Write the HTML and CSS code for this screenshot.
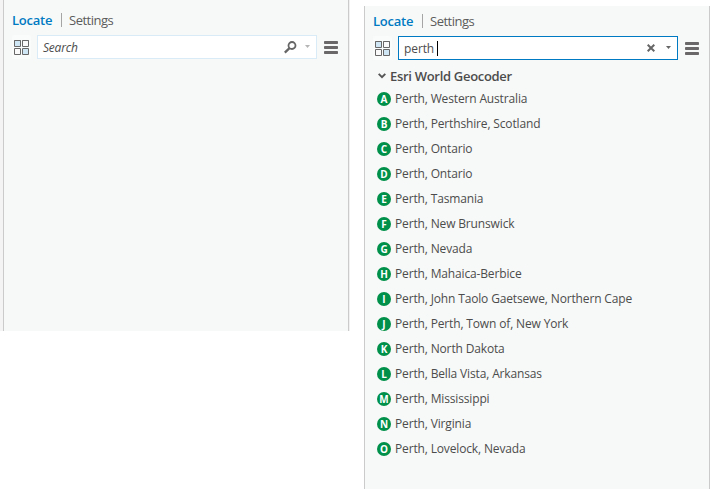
FILE: index.html
```html
<!DOCTYPE html>
<html lang="en">
<head>
<meta charset="utf-8">
<title>Locate</title>
<link rel="stylesheet" href="styles.css">
</head>
<body>
<svg width="0" height="0" class="defs">
  <symbol id="grid" viewBox="0 0 15 15"><g stroke="#686868"><path fill="#cfe7f5" d="M.5.5h6v5h-6zM8.500 8.500h6v6h-6z"/><path fill="#fafafa" d="M8.500.5h6v5h-6zM.5 8.500h6v6h-6z"/><path fill="#cfe7f5" d="M.5.5h6v6h-6z"/><path fill="#fafafa" d="M8.500.5h6v6h-6z"/></g></symbol>
  <symbol id="menu" viewBox="0 0 14 13"><g fill="#6a6868"><rect width="14" height="3" rx=".8"/><rect y="5" width="14" height="3" rx=".8"/><rect y="10" width="14" height="3" rx=".8"/></g></symbol>
  <symbol id="caret" viewBox="0 0 5 3"><path d="M0 0h5L2.500 3z" fill="currentColor"/></symbol>
</svg>
<main class="stage">
  <section class="pane pane-empty">
    <nav class="tabs"><span class="tab active">Locate</span><i class="divider"></i><span class="tab settings">Settings</span></nav>
    <div class="toolbar">
      <span class="grid-button"><svg width="15" height="15"><use href="#grid"/></svg></span>
      <div class="search"><span class="placeholder">Search</span>
        <svg class="magnifier" width="13" height="13" viewBox="0 0 13 13" fill="none" stroke="#666"><circle cx="8" cy="4.500" r="3.500" stroke-width="1.800"/><path d="M5.500 7.200.8 11.600" stroke-width="2.300"/></svg>
        <svg class="caret" width="5" height="3"><use href="#caret"/></svg></div>
      <svg class="menu" width="14" height="13"><use href="#menu"/></svg>
    </div>
  </section>
  <section class="pane pane-results">
    <nav class="tabs"><span class="tab active">Locate</span><i class="divider"></i><span class="tab settings">Settings</span></nav>
    <div class="toolbar">
      <span class="grid-button"><svg width="15" height="15"><use href="#grid"/></svg></span>
      <div class="search focused"><span class="query">perth</span><i class="cursor"></i>
        <svg class="clear" width="8" height="8" viewBox="0 0 8 8"><path d="M.7.7l6.600 6.600M7.300.7.7 7.300" stroke="#666" stroke-width="2"/></svg>
        <svg class="caret" width="5" height="3"><use href="#caret"/></svg></div>
      <svg class="menu" width="14" height="13"><use href="#menu"/></svg>
    </div>
    <h2 class="group"><svg width="8" height="6" viewBox="0 0 8 6"><path d="M.7.8 4 4.200 7.300.8" fill="none" stroke="#555" stroke-width="1.900"/></svg><span>Esri World Geocoder</span></h2>
    <ul class="results">
      <li><b>A</b><span>Perth, Western Australia</span></li>
      <li><b>B</b><span>Perth, Perthshire, Scotland</span></li>
      <li><b>C</b><span>Perth, Ontario</span></li>
      <li><b>D</b><span>Perth, Ontario</span></li>
      <li><b>E</b><span>Perth, Tasmania</span></li>
      <li><b>F</b><span>Perth, New Brunswick</span></li>
      <li><b>G</b><span>Perth, Nevada</span></li>
      <li><b>H</b><span>Perth, Mahaica-Berbice</span></li>
      <li><b>I</b><span>Perth, John Taolo Gaetsewe, Northern Cape</span></li>
      <li><b>J</b><span>Perth, Perth, Town of, New York</span></li>
      <li><b>K</b><span>Perth, North Dakota</span></li>
      <li><b>L</b><span>Perth, Bella Vista, Arkansas</span></li>
      <li><b>M</b><span>Perth, Mississippi</span></li>
      <li><b>N</b><span>Perth, Virginia</span></li>
      <li><b>O</b><span>Perth, Lovelock, Nevada</span></li>
    </ul>
  </section>
</main>
</body>
</html>
```
FILE: styles.css
```css
* { box-sizing: border-box; }
body { margin: 0; background: #fff; font-family: "Open Sans", "Noto Sans", sans-serif; font-size: 12px; color: #4c4c4c; overflow: hidden; }
.defs { display: block; }
svg { display: block; flex: none; }
.stage { display: flex; align-items: flex-start; width: 711px; height: 491px; }
.pane { width: 346px; flex: none; background: #f7f9f8; border: solid #cbcbcb; border-width: 0 1px; padding-left: 8px; }
.pane-empty { height: 331px; margin-left: 3px; padding-top: 11px; box-shadow: -3px 0 #f4f4f4, 1px 0 #f1f1f1; }
.pane-results { height: 483px; margin: 6px 0 0 15px; padding-top: 6px; }
.tabs { display: flex; height: 18px; align-items: center; line-height: 18px; font-size: 13px; }
.tab { white-space: nowrap; }
.active { width: 49px; color: #007ac2; font-weight: 600; letter-spacing: -.25px; }
.divider { width: 1px; height: 14px; margin-right: 7px; background: #a5a5a5; }
.settings { color: #5c5c5c; letter-spacing: -.5px; }
.toolbar { display: flex; align-items: center; height: 24px; margin-top: 6px; }
.grid-button { display: flex; align-items: center; justify-content: center; width: 19px; height: 24px; margin-right: 6px; background: #fafbfb; border-radius: 2px; }
.search { display: flex; align-items: center; width: 280px; height: 24px; padding: 0 6px 0 5px; background: #fff; border: 1px solid #d9ebf7; color: #b5b5b5; }
.focused { border-color: #007ac2; color: #666; }
.placeholder { color: #4c4c4c; font-style: italic; letter-spacing: -.2px; }
.query { color: #4c4c4c; letter-spacing: -.1px; }
.cursor { width: 1px; height: 15px; margin-left: 3px; background: #000; }
.magnifier, .clear { margin-left: auto; }
.magnifier { margin-right: 8px; }
.clear { margin-right: 11px; }
.caret { margin-top: -1px; }
.menu { margin-left: 7px; }
.group { display: flex; align-items: center; gap: 4px; height: 20px; margin: 6px 0 0 5px; font-size: 13px; font-weight: 600; letter-spacing: -.3px; white-space: nowrap; }
.results { list-style: none; margin: 0 0 0 4px; padding: 0; }
.results li { display: flex; align-items: center; height: 25px; white-space: nowrap; letter-spacing: -.15px; }
.results b { width: 14px; height: 14px; margin-right: 4px; border-radius: 50%; background: #00904a; color: #fff; font-size: 10px; line-height: 14px; text-align: center; letter-spacing: 0; }
```
